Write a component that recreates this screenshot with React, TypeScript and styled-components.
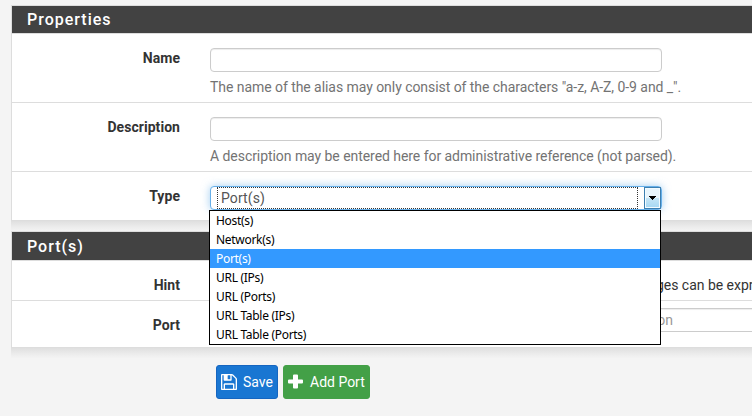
import React from "react";
import styled, { createGlobalStyle } from "styled-components";

const GlobalStyle = createGlobalStyle`
  *, *::before, *::after { box-sizing: border-box; }
  html, body { margin: 0; height: 100%; overflow: hidden; background: #f4f4f4; }
  body { font: 14px/20px Roboto, sans-serif; color: #333; }
`;

const Page = styled.main`
  width: 100%;
  padding: 5px 0 0 11px;
  overflow: hidden;
`;

const Panel = styled.section<{ $raised?: boolean }>`
  position: relative;
  z-index: ${(p) => (p.$raised ? 1 : 0)};
  margin-bottom: 10px;
`;

const PanelFrame = styled.div`
  border: 1px solid #ddd;
  border-right: 0;
  background: #fff;
`;

const PanelShadow = styled.div`
  height: 10px;
  margin-bottom: -10px;
  background: linear-gradient(#dfdfdf, #ebebeb 55%, #f3f3f3);
`;

const PanelHeading = styled.h2<{ $height: number }>`
  margin: 0;
  height: ${(p) => p.$height}px;
  padding-left: 15px;
  background: #424242;
  color: #fff;
  font-size: 16px;
  font-weight: 500;
  line-height: ${(p) => (p.$height - 27) * 2 + 27}px;
  letter-spacing: 1px;
`;

const Row = styled.div<{ $height: number; $top: number }>`
  display: grid;
  grid-template-columns: 168px 1fr;
  column-gap: 30px;
  height: ${(p) => p.$height}px;
  padding-top: ${(p) => p.$top}px;
  border-top: 1px solid #ddd;
`;

const Label = styled.label<{ $offset?: number }>`
  padding-top: ${(p) => p.$offset ?? 0}px;
  text-align: right;
  font-weight: 700;
  letter-spacing: 0.05px;
`;

const Field = styled.div`
  position: relative;
  min-width: 0;
`;

const Input = styled.input`
  display: block;
  flex: none;
  width: 452px;
  height: 24px;
  padding: 0 12px;
  border: 1px solid #ccc;
  border-radius: 4px;
  background: #fff;
  box-shadow: inset 0 1px 1px rgba(0, 0, 0, 0.075);
  font: 14px Roboto, sans-serif;
  outline: none;
  &::placeholder { color: #999; opacity: 1; }
`;

const Inputs = styled.div`
  display: flex;
  gap: 14px;
  min-width: 0;
  ${Input} { width: 365px; }
`;

const Help = styled.div`
  margin-top: 5px;
  color: #737373;
  letter-spacing: -0.055px;
  white-space: nowrap;
`;

const Hint = styled.div`
  min-width: 0;
  letter-spacing: -0.02px;
  white-space: nowrap;
`;

const SelectBox = styled.div`
  display: flex;
  width: 452px;
  height: 24px;
  padding-left: 6px;
  border: 1px solid #66afe9;
  border-radius: 4px;
  background: #fff;
  box-shadow: 0 0 8px rgba(102, 175, 233, 0.6);
`;

const SelectValue = styled.div`
  width: 421px;
  height: 22px;
  padding-left: 3px;
  border: 1px dotted #333;
  color: #555;
  line-height: 21px;
  letter-spacing: 0.1px;
`;

const SelectButton = styled.div`
  display: flex;
  align-items: center;
  justify-content: center;
  width: 17px;
  height: 22px;
  margin-left: 6px;
  border: 1px solid #3c7fb1;
  background: linear-gradient(#e8f5fd 0 48%, #c4e5f6 52%, #a5d7f3);
  box-shadow: inset 0 0 0 1px #f3fbff;
`;

const Menu = styled.ul`
  position: absolute;
  top: 24px;
  left: -1px;
  width: 452px;
  margin: 0;
  padding: 0;
  border: 1px solid #000;
  background: #fff;
  list-style: none;
`;

const Option = styled.li<{ $active?: boolean }>`
  height: 19px;
  padding-left: 6px;
  background: ${(p) => (p.$active ? "#3399ff" : "#fff")};
  color: ${(p) => (p.$active ? "#fff" : "#000")};
  font: 12px/19px "Noto Sans", sans-serif;
  letter-spacing: -0.3px;
`;

const Actions = styled.div`
  position: relative;
  display: flex;
  gap: 5px;
  margin: 17px 0 0 205px;
`;

const Button = styled.button<{ $tone: "save" | "add" }>`
  display: flex;
  align-items: center;
  gap: ${(p) => (p.$tone === "save" ? 6 : 7)}px;
  width: ${(p) => (p.$tone === "save" ? 62 : 87)}px;
  height: 34px;
  padding: 0 0 0 4px;
  border: 1px solid ${(p) => (p.$tone === "save" ? "#1565c0" : "#43a047")};
  border-radius: 3px;
  background: ${(p) => (p.$tone === "save" ? "#1976d2" : "#43a047")};
  color: #fff;
  font: 14px/20px Roboto, sans-serif;
  white-space: nowrap;
  svg { flex: none; }
`;

const FloppyIcon = () => (
  <svg width="16" height="16" viewBox="128 128 1536 1536" fill="currentColor">
    <path d="M512 1536h768v-384h-768v384zm896 0h128v-896q0-14-10-38.5t-20-34.5l-281-281q-10-10-34-20t-39-10v416q0 40-28 68t-68 28h-576q-40 0-68-28t-28-68v-416h-128v1280h128v-416q0-40 28-68t68-28h832q40 0 68 28t28 68v416zm-384-928v-320q0-13-9.5-22.5t-22.5-9.5h-192q-13 0-22.5 9.5t-9.5 22.5v320q0 13 9.5 22.5t22.5 9.5h192q13 0 22.5-9.5t9.5-22.5zm640 32v928q0 40-28 68t-68 28h-1344q-40 0-68-28t-28-68v-1344q0-40 28-68t68-28h928q40 0 88 20t76 48l280 280q28 28 48 76t20 88z" />
  </svg>
);

const PlusIcon = () => (
  <svg width="15" height="17" viewBox="0 0 15 17" fill="currentColor">
    <path d="M6 0.5h3q1 0 1 1v4h4q1 0 1 1v2q0 1-1 1h-4v4q0 1-1 1H6q-1 0-1-1v-4H1q-1 0-1-1v-2q0-1 1-1h4v-4q0-1 1-1z" />
  </svg>
);

const ArrowIcon = () => (
  <svg width="7" height="4" viewBox="0 0 7 4" shapeRendering="crispEdges">
    <path d="M0 0h7v1H6v1H5v1H4v1H3V3H2V2H1V1H0z" />
  </svg>
);

const TYPES = [
  "Host(s)",
  "Network(s)",
  "Port(s)",
  "URL (IPs)",
  "URL (Ports)",
  "URL Table (IPs)",
  "URL Table (Ports)",
];

export default function App() {
  return (
    <>
      <GlobalStyle />
      <Page>
        <Panel $raised>
          <PanelFrame>
            <PanelHeading $height={27}>Properties</PanelHeading>
            <Row $height={69} $top={14}>
              <Label>Name</Label>
              <Field>
                <Input />
                <Help>The name of the alias may only consist of the characters "a-z, A-Z, 0-9 and _".</Help>
              </Field>
            </Row>
            <Row $height={69} $top={14}>
              <Label>Description</Label>
              <Field>
                <Input />
                <Help>A description may be entered here for administrative reference (not parsed).</Help>
              </Field>
            </Row>
            <Row $height={49} $top={14}>
              <Label>Type</Label>
              <Field>
                <SelectBox>
                  <SelectValue>Port(s)</SelectValue>
                  <SelectButton>
                    <ArrowIcon />
                  </SelectButton>
                </SelectBox>
                <Menu>
                  {TYPES.map((type) => (
                    <Option key={type} $active={type === "Port(s)"}>
                      {type}
                    </Option>
                  ))}
                </Menu>
              </Field>
            </Row>
          </PanelFrame>
          <PanelShadow />
        </Panel>
        <Panel>
          <PanelFrame>
            <PanelHeading $height={28}>Port(s)</PanelHeading>
            <Row $height={40} $top={14}>
              <Label>Hint</Label>
              <Hint>
                Enter ports as desired, with a single port or port range per entry. Port ranges can be expressed by separating with a colon.
              </Hint>
            </Row>
            <Row $height={47} $top={7}>
              <Label $offset={7}>Port</Label>
              <Inputs>
                <Input />
                <Input placeholder="Description" />
              </Inputs>
            </Row>
          </PanelFrame>
          <PanelShadow />
        </Panel>
        <Actions>
          <Button $tone="save">
            <FloppyIcon />
            Save
          </Button>
          <Button $tone="add">
            <PlusIcon />
            Add Port
          </Button>
        </Actions>
      </Page>
    </>
  );
}
